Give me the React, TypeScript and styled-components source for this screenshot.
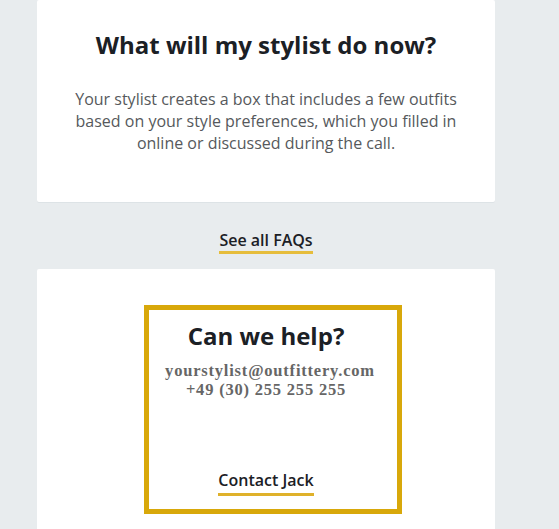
import React from "react";
import styled, { createGlobalStyle } from "styled-components";

const Global = createGlobalStyle`
  html, body { margin: 0; padding: 0; background: #e8ecee; }
  body { font-family: "Open Sans", "Liberation Sans", sans-serif; }
  * { box-sizing: border-box; }
`;

const Page = styled.div`
  width: 559px;
  height: 529px;
  overflow: hidden;
  background: #e8ecee;
`;

const Column = styled.div`
  width: 458px;
  margin-left: 37px;
  display: flex;
  flex-direction: column;
`;

const Card = styled.section<{ $pt: number; $pb: number; $h?: number }>`
  position: relative;
  background: #ffffff;
  border-radius: 2px;
  box-shadow: 0 1px 0 #dde3e6;
  padding: ${(p) => p.$pt}px 30px ${(p) => p.$pb}px;
  ${(p) => (p.$h ? `height: ${p.$h}px;` : "")}
  display: flex;
  flex-direction: column;
  align-items: center;
  text-align: center;
`;

const Title = styled.h2`
  margin: 0;
  font-family: "Open Sans", sans-serif;
  font-weight: 700;
  font-size: 24px;
  line-height: 32px;
  color: #1b2025;
`;

const Body = styled.p`
  margin: 27px 0 0;
  max-width: 386px;
  font-size: 16px;
  line-height: 22px;
  color: #56595c;
`;

const LinkRow = styled.div<{ $h: number; $pt: number }>`
  height: ${(p) => p.$h}px;
  padding-top: ${(p) => p.$pt}px;
  display: flex;
  justify-content: center;
  align-items: flex-start;
`;

const UnderLink = styled.a<{ $gap: number; $color: string }>`
  display: inline-block;
  font-family: "Open Sans", sans-serif;
  font-weight: 600;
  font-size: 16px;
  line-height: 21px;
  color: #1b2025;
  text-decoration: none;
  padding-bottom: ${(p) => p.$gap}px;
  border-bottom: 3px solid ${(p) => p.$color};
`;

const ContactLines = styled.div`
  margin-top: 10px;
  font-family: "Liberation Serif", "DejaVu Serif", serif;
  font-weight: 700;
  font-size: 16.5px;
  line-height: 18.5px;
  letter-spacing: 0.8px;
  color: #666666;
  display: flex;
  flex-direction: column;
  align-items: center;
`;

const ContactLine = styled.span<{ $shift?: number }>`
  padding-left: ${(p) => (p.$shift ? p.$shift * 2 : 0)}px;
`;

const Highlight = styled.div`
  position: absolute;
  left: 107px;
  top: 36px;
  width: 258px;
  height: 209px;
  border: 5px solid #d8a80a;
  pointer-events: none;
`;

export default function App() {
  return (
    <Page>
      <Global />
      <Column>
        <Card $pt={29} $pb={48} $h={202}>
          <Title>What will my stylist do now?</Title>
          <Body>
            Your stylist creates a box that includes a few outfits based on your style
            preferences, which you filled in online or discussed during the call.
          </Body>
        </Card>
        <LinkRow $h={67} $pt={28}>
          <UnderLink href="#" $gap={0} $color="#e6bd3c">See all FAQs</UnderLink>
        </LinkRow>
        <Card $pt={51} $pb={40} $h={290}>
          <Title>Can we help?</Title>
          <ContactLines>
            <ContactLine $shift={4}>yourstylist@outfittery.com</ContactLine>
            <ContactLine>+49 (30) 255 255 255</ContactLine>
          </ContactLines>
          <LinkRow $h={100} $pt={71}>
            <UnderLink href="#" $gap={2} $color="#dfb12a">Contact Jack</UnderLink>
          </LinkRow>
          <Highlight />
        </Card>
      </Column>
    </Page>
  );
}
